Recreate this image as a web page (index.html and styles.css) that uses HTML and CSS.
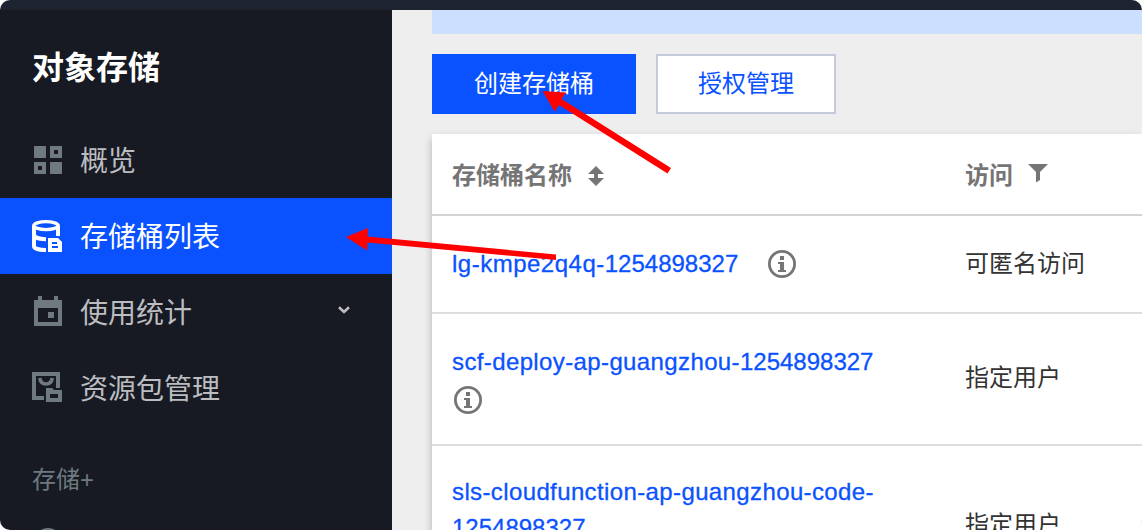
FILE: index.html
```html
<!DOCTYPE html>
<html lang="zh-CN">
<head>
<meta charset="utf-8">
<title>对象存储</title>
<link rel="stylesheet" href="styles.css">
</head>
<body>
<div class="window">
  <header class="topbar"></header>
  <div class="body">
    <aside class="sidebar">
      <h1 class="title">对象存储</h1>
      <nav class="nav">
        <a class="item">
          <svg class="icon" viewBox="0 0 32 32"><path fill-rule="evenodd" d="M2 2h12v12H2zM18 2h12v12H18zM22 6v4h4V6zM2 18h12v12H2zM6 22v4h4v-4zM18 18h12v12H18z"/></svg>
          <span>概览</span>
        </a>
        <a class="item active">
          <svg class="icon" viewBox="0 0 32 32"><g fill="none" stroke="currentColor" stroke-width="4"><ellipse cx="14" cy="5.600" rx="12.200" ry="4" stroke-width="3.400"/><path d="M2 6v20c0 2.500 5 4 12 4M26 6v10M2 14.500c0 3 5 4.700 12 4.700"/></g><path fill-rule="evenodd" d="M16 18h10l4 4v10H16zM20 22v2h5v-2zM20 26v2h6v-2z"/></svg>
          <span>存储桶列表</span>
        </a>
        <a class="item">
          <svg class="icon" viewBox="0 0 32 32"><path fill-rule="evenodd" d="M6 0h4v4h12V0h4v4h4v26H2V4h4zM6 12v14h20V12zM16 16h6v6h-6z"/></svg>
          <span>使用统计</span>
          <svg class="chevron" viewBox="0 0 12 8"><path d="M1 1.300l5 4.700 5-4.700"/></svg>
        </a>
        <a class="item">
          <svg class="icon" viewBox="0 0 32 32"><path fill-rule="evenodd" d="M0 0h28v16h-4V4H4v20h8v4H0zM14 16h6l2 2h8v12H14zM18 22v4h8v-4z"/><path d="M7.800 6c.5 4 2.700 6 6.200 6s5.700-2 6.200-6" fill="none" stroke="currentColor" stroke-width="3.600"/></svg>
          <span>资源包管理</span>
        </a>
      </nav>
      <div class="group">存储+</div>
      <div class="item partial">
        <svg class="icon" viewBox="0 0 32 32"><circle cx="16" cy="14" r="12" fill="none" stroke="currentColor" stroke-width="4"/></svg>
      </div>
    </aside>
    <main class="content">
      <div class="notice"></div>
      <div class="actions">
        <button class="btn primary">创建存储桶</button>
        <button class="btn">授权管理</button>
      </div>
      <section class="table">
        <div class="row head">
          <div class="cell"><span>存储桶名称</span><svg class="sort" viewBox="0 0 16 20"><path d="M8 0l8 8h-6v4h6l-8 8-8-8h6V8H0z"/></svg></div>
          <div class="cell"><span>访问</span><svg class="filter" viewBox="0 0 20 19"><path d="M0 0h20l-8 8v8l-4 2.500V8z"/></svg></div>
        </div>
        <div class="row">
          <div class="cell name"><a class="link"><span class="prefix short">lg-kmpe2q4q-</span>1254898327</a><svg class="info" viewBox="0 0 28 28"><circle cx="14" cy="14" r="12.600"/><path d="M12 6h4v4h-4zM10 12h6v8h2v2h-8v-2h2v-6h-2z"/></svg></div>
          <div class="cell">可匿名访问</div>
        </div>
        <div class="row">
          <div class="cell name wrap"><a class="link"><span class="prefix">scf-deploy-ap-guangzhou-</span>1254898327</a><svg class="info" viewBox="0 0 28 28"><circle cx="14" cy="14" r="12.600"/><path d="M12 6h4v4h-4zM10 12h6v8h2v2h-8v-2h2v-6h-2z"/></svg></div>
          <div class="cell access">指定用户</div>
        </div>
        <div class="row last">
          <div class="cell name wrap"><a class="link"><span class="prefix">sls-cloudfunction-ap-guangzhou-code-</span><br>1254898327</a></div>
          <div class="cell">指定用户</div>
        </div>
      </section>
    </main>
  </div>
  <svg class="arrows" viewBox="0 0 1142 530">
    <path d="M542.500 91l23.500 1.500-4.500 6.500 109.500 69-3.500 5.500-108.500-68.500-4.500 6.500z"/>
    <path d="M346 237l22-9-.5 8.500L556 254.500v5.500l-188.500-17.500-.5 8z"/>
  </svg>
</div>
</body>
</html>
```
FILE: styles.css
```css
* { box-sizing: border-box; }
body {
  margin: 0;
  background: #fff;
  font-family: "Liberation Sans", "Noto Sans CJK SC", sans-serif;
}
.window {
  position: relative;
  display: flex;
  flex-direction: column;
  height: 530px;
  overflow: hidden;
  border-radius: 10px;
}
.topbar { flex: none; height: 10px; background: #1e2330; }
.body { display: flex; flex: 1; min-height: 0; }
.sidebar {
  width: 392px;
  flex: none;
  overflow: hidden;
  background: #171a22;
  color: #bbbdc0;
}
.title {
  margin: 0;
  padding: 34px 32px 14px;
  height: 112px;
  font-size: 32px;
  line-height: 48px;
  color: #fff;
}
.item {
  display: flex;
  align-items: center;
  height: 76px;
  padding: 0 36px 0 32px;
  gap: 16px;
  font-size: 28px;
}
.item span { padding-bottom: 2px; }
.icon { width: 32px; height: 32px; flex: none; fill: currentColor; color: #6e7a80; overflow: visible; }
.active { background: #0a52ff; color: #fff; }
.active .icon { color: #fff; }
.chevron {
  width: 12px;
  height: 8px;
  margin: -4px 6px 0 auto;
  fill: none;
  stroke: currentColor;
  stroke-width: 2.600;
}
.group { padding: 36px 32px 0; height: 102px; font-size: 24px; line-height: 36px; color: #6e7a80; }
.partial { align-items: flex-start; }
.content {
  flex: 1;
  min-width: 0;
  display: flex;
  flex-direction: column;
  padding-left: 40px;
  background: #eee;
}
.notice { flex: none; height: 24px; background: #ccdfff; }
.actions { display: flex; flex: none; gap: 20px; padding: 20px 0; }
.btn {
  width: 180px;
  height: 60px;
  padding: 0 0 5px;
  border: 2px solid #c4cadb;
  background: #fff;
  color: #0a52ff;
  font: inherit;
  font-size: 24px;
}
.primary { width: 204px; border-color: #0a52ff; background: #0a52ff; color: #fff; }
.table {
  flex: none;
  background: #fff;
  box-shadow: 0 4px 8px rgba(0, 0, 0, .25);
}
.row {
  display: grid;
  grid-template-columns: 513px 1fr;
  align-items: center;
  height: 98px;
  border-bottom: 2px solid #ddd;
  font-size: 24px;
  line-height: 36px;
  color: #333;
}
.row:has(.wrap) { height: 132px; }
.row.last { height: 160px; }
.cell { display: flex; align-items: center; padding-left: 20px; }
.access { padding-bottom: 2px; }
.head { height: 82px; padding-top: 4px; border-color: #d2d2d2; font-weight: bold; color: #757575; }
.head svg { fill: #757575; }
.sort { width: 16px; height: 20px; margin-left: 16px; }
.filter { width: 20px; height: 19px; margin: -6px 0 0 15px; }
.name { gap: 30px; }
.wrap { align-self: start; flex-direction: column; align-items: flex-start; gap: 6px; padding-top: 30px; }
.last .wrap { padding-top: 28px; }
.link { color: #0a52ff; -webkit-text-stroke: .3px #0a52ff; }
.prefix { letter-spacing: .38px; }
.short { letter-spacing: .5px; }
.info { width: 28px; height: 28px; fill: #757575; }
.wrap .info { margin-left: 2px; }
.info circle { fill: none; stroke: #757575; stroke-width: 2.800; }
.arrows { position: absolute; inset: 0; width: 1142px; height: 530px; fill: #f00; }
```
